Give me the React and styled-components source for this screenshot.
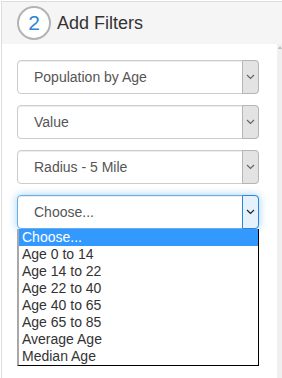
import React from "react";
import styled, { createGlobalStyle } from "styled-components";

const GlobalStyle = createGlobalStyle`
  html, body {
    margin: 0;
    padding: 0;
    background: #fff;
    overflow: hidden;
  }
  body {
    font-family: "Liberation Sans", Arial, sans-serif;
    padding: 1px 0 0 1px;
  }
`;

const Panel = styled.div`
  width: 281px;
  height: 377px;
  border-top: 1px solid #ddd;
  border-left: 1px solid #ddd;
  display: flex;
  flex-direction: column;
  box-sizing: border-box;
`;

const Header = styled.div`
  height: 42px;
  background: #f5f5f5;
  display: flex;
  align-items: center;
  gap: 6px;
  padding-left: 15px;
`;

const StepCircle = styled.div`
  width: 34px;
  height: 34px;
  box-sizing: border-box;
  border: 2px solid #b3b3b3;
  border-radius: 50%;
  background: #fff;
  color: #2b87d3;
  font-size: 21px;
  display: flex;
  align-items: center;
  justify-content: center;
`;

const Title = styled.div`
  font-size: 18px;
  color: #333;
  margin-top: 1px;
`;

const Body = styled.div`
  flex: 1;
  display: flex;
`;

const Content = styled.div`
  flex: 1;
  padding: 16px 0 0 15px;
`;

const ScrollTrack = styled.div`
  width: 5px;
  background: #f0f0f0;
  display: flex;
  justify-content: flex-end;
  padding-top: 2px;
`;

const Select = styled.div`
  width: 242px;
  height: 34px;
  box-sizing: border-box;
  margin-bottom: 11px;
  border: 1px solid ${(p) => (p.focused ? "#66afe9" : "#ccc")};
  border-radius: 4px;
  display: flex;
  align-items: stretch;
  background: #fff;
  box-shadow: ${(p) =>
    p.focused
      ? "inset 0 1px 1px rgba(0,0,0,.075), 0 0 8px rgba(102,175,233,.6)"
      : "inset 0 1px 1px rgba(0,0,0,.075)"};
  margin-bottom: ${(p) => (p.focused ? "0" : "11px")};
`;

const SelectText = styled.div`
  flex: 1;
  font-size: 14px;
  color: #555;
  display: flex;
  align-items: center;
  padding-left: 16px;
`;

const ArrowBox = styled.div`
  width: 17px;
  margin: -1px -1px -1px 0;
  box-sizing: border-box;
  border: 1px solid ${(p) => (p.focused ? "#2a86dc" : "#b5b5b5")};
  border-radius: 0 4px 4px 0;
  background: ${(p) => (p.focused ? "#e5f1fb" : "#e3e3e3")};
  display: flex;
  align-items: center;
  justify-content: center;
`;

const List = styled.div`
  width: 242px;
  box-sizing: border-box;
  border-left: 2px solid #a8a8a8;
  border-right: 1px solid #000;
  border-bottom: 1px solid #000;
  background: #fff;
`;

const Option = styled.div`
  height: 17px;
  line-height: 17px;
  font-size: 14px;
  padding-left: 3px;
  color: ${(p) => (p.active ? "#fff" : "#333")};
  background: ${(p) => (p.active ? "#3399ff" : "transparent")};
`;

const Chevron = ({ dark }) => (
  <svg width="9" height="6" viewBox="0 0 9 6">
    <path
      d="M1 1 L4.5 4.5 L8 1"
      fill="none"
      stroke={dark ? "#222" : "#666"}
      strokeWidth="1.2"
    />
  </svg>
);

const FilterSelect = ({ label, focused }) => (
  <Select focused={focused}>
    <SelectText>{label}</SelectText>
    <ArrowBox focused={focused}>
      <Chevron dark={focused} />
    </ArrowBox>
  </Select>
);

const options = [
  "Choose...",
  "Age 0 to 14",
  "Age 14 to 22",
  "Age 22 to 40",
  "Age 40 to 65",
  "Age 65 to 85",
  "Average Age",
  "Median Age",
];

const App = () => (
  <>
    <GlobalStyle />
    <Panel>
      <Header>
        <StepCircle>2</StepCircle>
        <Title>Add Filters</Title>
      </Header>
      <Body>
        <Content>
          <FilterSelect label="Population by Age" />
          <FilterSelect label="Value" />
          <FilterSelect label="Radius - 5 Mile" />
          <FilterSelect label="Choose..." focused />
          <List>
            {options.map((o, i) => (
              <Option key={o} active={i === 0}>
                {o}
              </Option>
            ))}
          </List>
        </Content>
        <ScrollTrack>
          <svg width="4" height="3" viewBox="0 0 4 3">
            <path d="M0 3 L2 0 L4 3 Z" fill="#bbb" />
          </svg>
        </ScrollTrack>
      </Body>
    </Panel>
  </>
);

export default App;
